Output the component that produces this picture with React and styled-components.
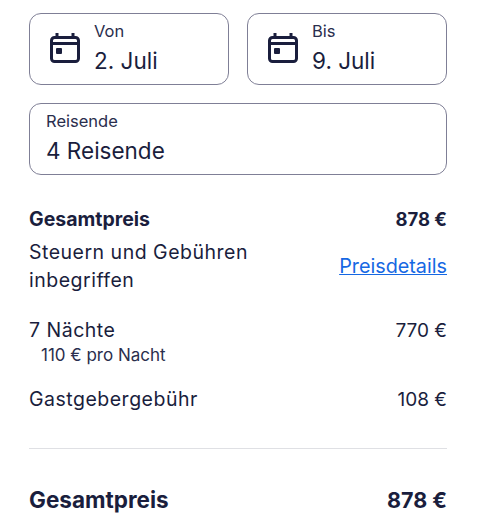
import React from "react";
import styled, { createGlobalStyle } from "styled-components";

const Global = createGlobalStyle`
  html, body { margin: 0; padding: 0; background: #fff; }
  body { font-family: "Inter", "Noto Sans", sans-serif; color: #1a1e3d; }
`;
const Page = styled.div`
  width: 477px; height: 532px; box-sizing: border-box; padding: 13px 30px 0 29px; overflow: hidden;
`;
const DateRow = styled.div`display: grid; grid-template-columns: 200px 200px; gap: 18px;`;
const Field = styled.div`
  height: 72px; box-sizing: border-box; border: 1px solid #7f7f96; border-radius: 12px;
  display: flex; align-items: center;
  padding: ${p => (p.$icon ? "0 0 2px 20px" : "0 0 2px 16px")};
  gap: 14px;
`;
const FieldText = styled.div`display: flex; flex-direction: column; gap: 3px;`;
const Label = styled.div`font-size: 16.5px; line-height: 22px; color: #2a2e4d;`;
const Value = styled.div`font-size: 22.5px; line-height: 32px;`;
const Travelers = styled(Field)`margin-top: 18px; width: 418px;`;
const Summary = styled.div`margin-top: 31px; display: flex; flex-direction: column;`;
const Row = styled.div`
  display: flex; justify-content: space-between; align-items: ${p => (p.$center ? "center" : "flex-start")};
  margin-top: ${p => p.$mt || 0}px;
`;
const Strong = styled.div`font-size: 19.5px; line-height: 26px; font-weight: 700;`;
const StrongAmount = styled(Strong)`font-size: 18.5px;`;
const Big = styled.div`font-size: 22.5px; line-height: 28px; font-weight: 700;`;
const BigAmount = styled(Big)`font-size: 21.5px;`;
const Text = styled.div`font-size: 19.5px; line-height: 28px; letter-spacing: .5px;`;
const Amount = styled.div`font-size: 19px; line-height: 30px;`;
const Small = styled.div`font-size: 17px; line-height: 22px; margin-top: -2px; padding-left: 12px; color: #2a2e4d;`;
const Link = styled.a`font-size: 19.8px; line-height: 28px; color: #1668e3; text-decoration: underline;`;
const Divider = styled.hr`margin: 33px 0 0; border: 0; border-top: 1px solid #dfe0e4;`;

const Cal = () => (
  <svg width="30" height="30" viewBox="0 0 30 30" fill="none" stroke="#1a1e3d" strokeWidth="3" aria-hidden="true">
    <rect x="1.5" y="4.5" width="27" height="24" rx="3" />
    <path d="M1.5 10.5h27M7 0v5M23 0v5" />
    <rect x="6" y="15" width="6" height="6" rx="1" fill="#1a1e3d" stroke="none" />
  </svg>
);

export default function App() {
  return (
    <Page>
      <Global />
      <DateRow>
        <Field $icon><Cal /><FieldText><Label>Von</Label><Value>2. Juli</Value></FieldText></Field>
        <Field $icon><Cal /><FieldText><Label>Bis</Label><Value>9. Juli</Value></FieldText></Field>
      </DateRow>
      <Travelers><FieldText><Label>Reisende</Label><Value>4 Reisende</Value></FieldText></Travelers>
      <Summary>
        <Row><Strong>Gesamtpreis</Strong><StrongAmount>878 €</StrongAmount></Row>
        <Row $center $mt={6}><Text>Steuern und Gebühren<br />inbegriffen</Text><Link href="#">Preisdetails</Link></Row>
        <Row $mt={22}><Text>7 Nächte</Text><Amount>770 €</Amount></Row>
        <Small>110 € pro Nacht</Small>
        <Row $mt={19}><Text>Gastgebergebühr</Text><Amount>108 €</Amount></Row>
        <Divider />
        <Row $mt={37}><Big>Gesamtpreis</Big><BigAmount>878 €</BigAmount></Row>
      </Summary>
    </Page>
  );
}
